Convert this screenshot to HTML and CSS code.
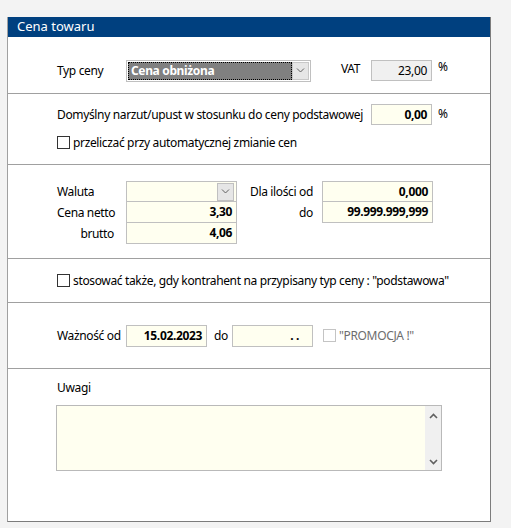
FILE: index.html
```html
<!DOCTYPE html>
<html lang="pl">
<head>
<meta charset="utf-8">
<link rel="stylesheet" href="styles.css">
</head>
<body>
<div class="panel">
  <div class="title">Cena towaru</div>

  <div class="sec sec1">
    <span class="lbl w69">Typ ceny</span>
    <div class="combo">
      <div class="combo-val">Cena obniżona</div>
      <div class="combo-btn"><svg width="9" height="5" viewBox="0 0 9 5"><path d="M1 0.5 L4.5 4 L8 0.5" fill="none" stroke="#606060" stroke-width="1"/></svg></div>
    </div>
    <span class="lbl vat">VAT</span>
    <div class="field gray num">23,00</div>
    <span class="pct">%</span>
  </div>

  <div class="sec sec2">
    <div class="row">
      <span class="lbl w314">Domyślny narzut/upust w stosunku do ceny podstawowej</span>
      <div class="field yel num bold">0,00</div>
      <span class="pct">%</span>
    </div>
    <label class="chk-row"><span class="chk"></span>przeliczać przy automatycznej zmianie cen</label>
  </div>

  <div class="sec sec3">
    <div class="grid">
      <span class="lbl">Waluta</span>
      <div class="field yel wide combo2"><div class="mini-btn"><svg width="9" height="5" viewBox="0 0 9 5"><path d="M1 0.5 L4.5 4 L8 0.5" fill="none" stroke="#606060" stroke-width="1"/></svg></div></div>
      <span class="lbl r">Dla ilości od</span>
      <div class="field yel wide num bold">0,000</div>

      <span class="lbl">Cena netto</span>
      <div class="field yel wide num bold up">3,30</div>
      <span class="lbl r">do</span>
      <div class="field yel wide num bold up">99.999.999,999</div>

      <span class="lbl r2">brutto</span>
      <div class="field yel wide num bold up">4,06</div>
    </div>
  </div>

  <div class="sec sec4">
    <label class="chk-row"><span class="chk"></span>stosować także, gdy kontrahent na przypisany typ ceny : "podstawowa"</label>
  </div>

  <div class="sec sec5">
    <span class="lbl w69">Ważność od</span>
    <div class="field yel date bold">15.02.2023</div>
    <span class="lbl do">do</span>
    <div class="field yel date bold dots">. .</div>
    <label class="chk-row dis"><span class="chk"></span>"PROMOCJA !"</label>
  </div>

  <div class="sec sec6">
    <div class="lbl">Uwagi</div>
    <div class="memo">
      <div class="memo-area"></div>
      <div class="scroll">
        <svg width="9" height="6" viewBox="0 0 9 6"><path d="M1 5 L4.5 1.5 L8 5" fill="none" stroke="#606060" stroke-width="1.6"/></svg>
        <svg width="9" height="6" viewBox="0 0 9 6"><path d="M1 1 L4.5 4.5 L8 1" fill="none" stroke="#606060" stroke-width="1.6"/></svg>
      </div>
    </div>
  </div>
</div>
</body>
</html>
```
FILE: styles.css
```css
* { box-sizing: border-box; }
html, body { margin: 0; padding: 0; }
body {
  background: #f3f3f3;
  font-family: "Noto Sans", "DejaVu Sans", sans-serif;
  font-size: 12px;
  letter-spacing: -0.35px;
  color: #000;
  padding: 17px 0 0 7px;
}
.panel {
  width: 484px;
  height: 505px;
  background: #fff;
  border: 1px solid #a0a0a0;
  border-right-color: #7c7c7c;
  border-bottom-color: #7c7c7c;
  border-top: none;
}
.title {
  height: 20px;
  background: #00407f;
  color: #fff;
  font-size: 13px;
  letter-spacing: 0;
  line-height: 19px;
  padding-left: 9px;
}
.sec {
  border-top: 1px solid #a0a0a0;
  padding-left: 49px;
}
.sec1 {
  border-top: none;
  height: 56px;
  display: flex;
  align-items: center;
  padding-top: 11px;
}
.lbl { white-space: nowrap; }
.w69 { width: 69px; }
.w314 { width: 314px; }
.combo {
  width: 185px;
  height: 22px;
  border: 1px solid #c0c0c0;
  display: flex;
  padding: 1px;
}
.combo-val {
  flex: 1;
  background: #808080;
  color: #fff;
  font-weight: bold;
  border: 1px dotted #000;
  line-height: 16px;
  padding-left: 2px;
}
.combo-btn {
  width: 17px;
  background: #e6e6e6;
  border: 1px solid #c8c8c8;
  display: flex;
  align-items: center;
  justify-content: center;
}
.vat { margin-left: 30px; width: 30px; position: relative; top: -2px; }
.field {
  height: 21px;
  border: 1px solid #c0c0c0;
  line-height: 19px;
  padding: 0 4px;
  width: 61px;
}
.gray { background: #f0f0f0; }
.yel { background: #fffff0; }
.num { text-align: right; }
.bold { font-weight: bold; }
.pct { margin-left: 6px; position: relative; top: -4px; }
.sec2 { height: 71px; padding-top: 10px; }
.sec2 .row { display: flex; align-items: center; }
.sec2 .pct { top: -1px; }
.chk-row {
  display: flex;
  align-items: center;
  white-space: nowrap;
}
.chk {
  width: 13px;
  height: 13px;
  border: 1px solid #333;
  background: #fff;
  margin-right: 3px;
}
.sec2 .chk-row { margin-top: 9px; }
.sec3 { height: 94px; padding-top: 16px; }
.grid {
  display: grid;
  grid-template-columns: 69px 111px 85px 111px;
  grid-auto-rows: 21px;
  align-items: center;
}
.grid .r { text-align: right; padding-right: 9px; }
.grid .r2 { text-align: right; padding-right: 12px; }
.wide { width: 111px; height: 22px; }
.up { margin-top: -1px; }
.combo2 { display: flex; justify-content: flex-end; align-items: center; padding: 0 2px 0 0; }
.mini-btn {
  width: 17px;
  height: 18px;
  background: #e6e6e6;
  border: 1px solid #c0c0c0;
  display: flex;
  align-items: center;
  justify-content: center;
}
.sec4 { height: 44px; display: flex; align-items: center; }
.sec5 { height: 66px; display: flex; align-items: center; }
.date { width: 81px; height: 22px; text-align: right; }
.dots { padding-right: 13px; }
.do { margin: 0 0 0 7px; width: 18px; }
.dis { margin-left: 10px; color: #6d6d6d; }
.dis .chk { border-color: #c4c4c4; }
.sec6 { height: 151px; padding-top: 10px; }
.memo {
  margin-top: 9px;
  width: 386px;
  height: 66px;
  border: 1px solid #b9b9b9;
  display: flex;
  margin-left: -1px;
}
.memo-area { flex: 1; background: #fffff0; }
.scroll {
  width: 16px;
  background: #f0f0f0;
  display: flex;
  flex-direction: column;
  justify-content: space-between;
  align-items: center;
  padding: 7px 0 5px;
}
.scroll svg { display: block; }
```
